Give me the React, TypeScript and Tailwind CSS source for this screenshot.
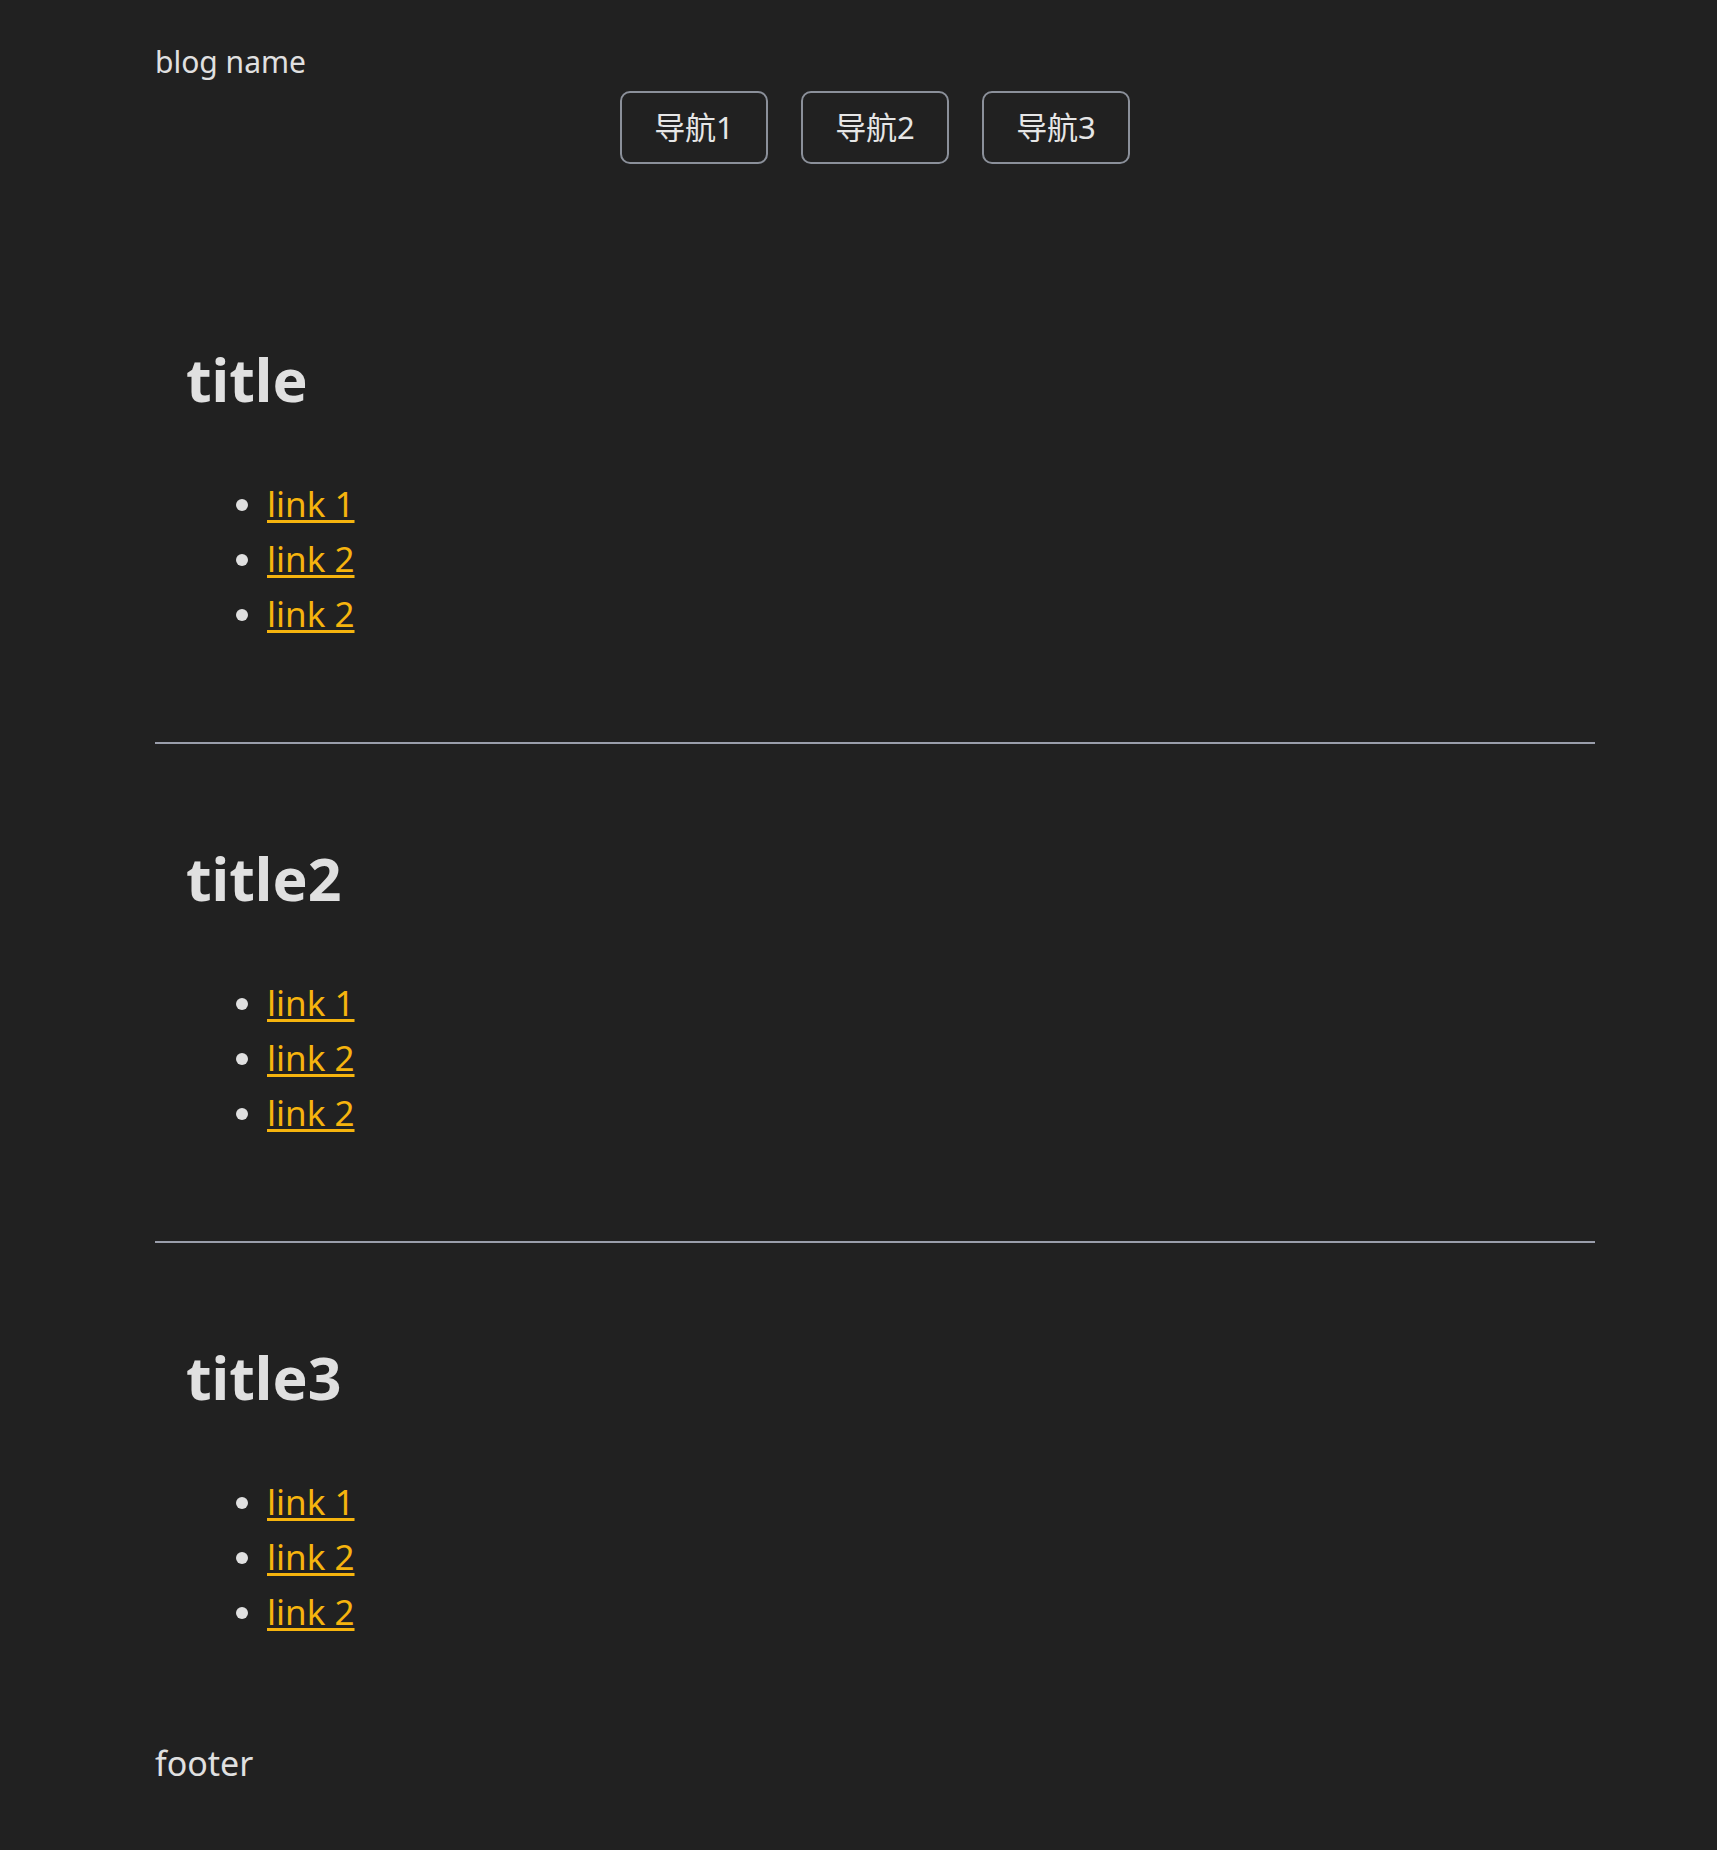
import React from 'react';

const sections = [
  { title: 'title', links: ['link 1', 'link 2', 'link 2'] },
  { title: 'title2', links: ['link 1', 'link 2', 'link 2'] },
  { title: 'title3', links: ['link 1', 'link 2', 'link 2'] },
];

const navItems = ['导航1', '导航2', '导航3'];

export default function App() {
  return (
    <div className="min-h-screen bg-[#212121] text-[#e0e0e0] [font-family:'Noto_Sans','Noto_Sans_CJK_SC',sans-serif]">
      <div className="ml-[155px] w-[1440px]">
        <header className="pt-[38px]">
          <div className="text-[30px] leading-[47px]">blog name</div>
          <nav className="mt-[6px] flex justify-center gap-[33px]">
            {navItems.map((item) => (
              <button
                key={item}
                className="flex h-[73px] w-[148px] items-center justify-center rounded-[10px] border-2 border-[#8b909a] text-[31px] text-[#e6e6e6]"
              >
                {item}
              </button>
            ))}
          </nav>
        </header>

        <main>
          {sections.map((section, i) => (
            <section key={section.title} className={i === 0 ? 'pt-[177px]' : 'pt-[96px]'}>
              <h1 className="pl-[31px] text-[59px] font-bold leading-[77px]">{section.title}</h1>
              <ul className="mt-[58px] list-disc pl-[112px] text-[35px] leading-[55px] marker:text-[#e0e0e0]">
                {section.links.map((link, j) => (
                  <li key={j}>
                    <a
                      href="#"
                      className="text-[#f6b40e] underline decoration-[3px] underline-offset-[3px]"
                    >
                      {link}
                    </a>
                  </li>
                ))}
              </ul>
              {i < sections.length - 1 && <hr className="mt-[101px] border-t-2 border-[#9a9eab]" />}
            </section>
          ))}
        </main>

        <footer className="mt-[99px] text-[34px] leading-[51px]">footer</footer>
      </div>
    </div>
  );
}
